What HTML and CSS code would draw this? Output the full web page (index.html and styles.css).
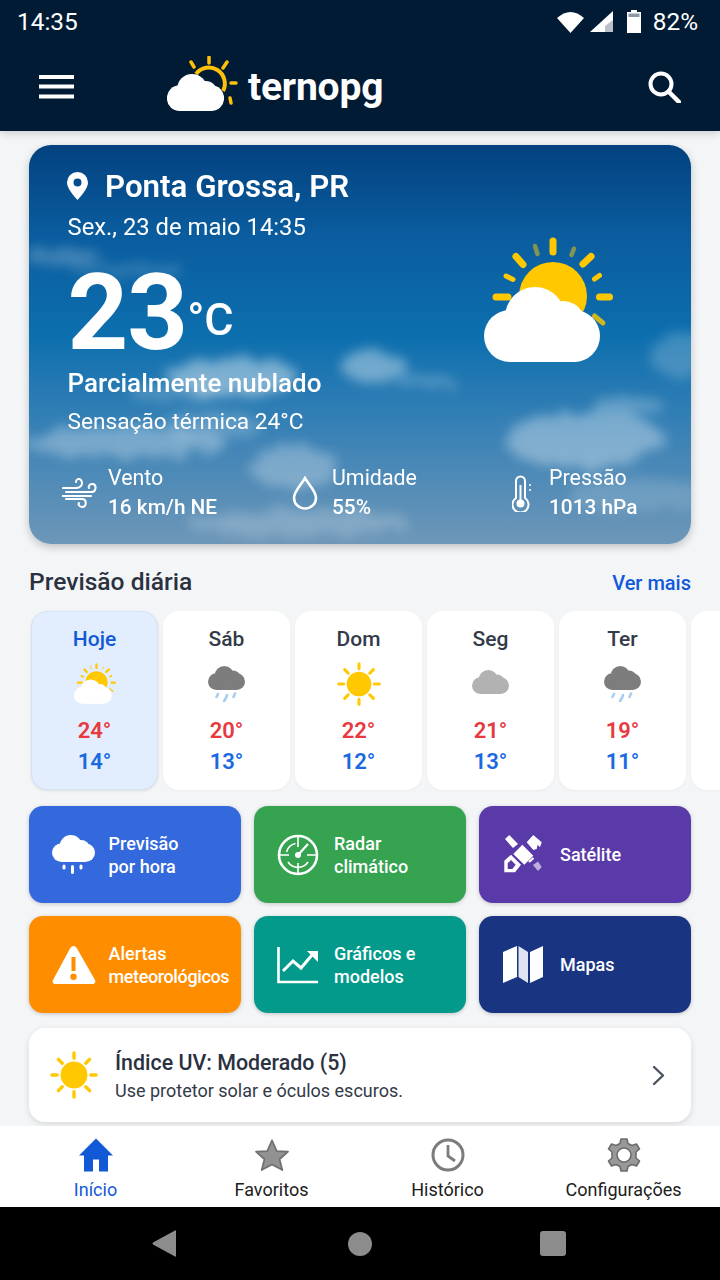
FILE: index.html
```html
<!DOCTYPE html>
<html lang="pt-BR">
<head>
<meta charset="utf-8">
<title>ternopg</title>
<link rel="stylesheet" href="styles.css">
</head>
<body>
<svg class="defs" width="0" height="0" aria-hidden="true">
  <defs>
    <symbol id="cloud" viewBox="0 50 116 75">
      <circle cx="26" cy="99" r="26"/><circle cx="51" cy="80" r="30"/><circle cx="79" cy="86" r="22"/><circle cx="90" cy="99" r="26"/><rect x="26" y="85" width="64" height="40"/>
    </symbol>
    <symbol id="sun-rays" viewBox="0 0 100 100">
      <g stroke-width="7" stroke-linecap="round" fill="none" stroke="currentColor">
        <path d="M50 4V15M50 85V96M4 50H15M85 50H96M17.5 17.5L25.5 25.5M74.5 74.5L82.5 82.5M17.5 82.5L25.5 74.5M74.5 25.5L82.5 17.5"/>
      </g>
      <circle cx="50" cy="50" r="28" fill="currentColor"/>
    </symbol>
    <symbol id="partly" viewBox="0 0 129 125">
      <circle cx="69" cy="59" r="34" fill="#ffc800"/>
      <g stroke="#ffc800" stroke-linecap="round" fill="none">
        <path stroke-width="7" d="M69 4V15M12 60H24M115.500 60H125.500M32 19.500L39 27.500M107 19.500L99 27"/>
        <path stroke-width="5" d="M22 39L29 42.500M115.500 38.500L110.500 42"/>
        <path stroke-width="4.500" opacity=".5" d="M51 9L53.500 17M90 11.500L87.500 18"/>
        <path stroke-width="5" opacity=".8" d="M110.500 79L119 86"/>
      </g>
      <g fill="#fff"><circle cx="26" cy="99" r="26"/><circle cx="51" cy="80" r="30"/><circle cx="79" cy="86" r="22"/><circle cx="90" cy="99" r="26"/><rect x="26" y="85" width="64" height="40"/></g>
    </symbol>
    <filter id="fluff" x="-30%" y="-60%" width="160%" height="220%">
      <feTurbulence type="fractalNoise" baseFrequency="0.05" numOctaves="4" seed="7"/>
      <feDisplacementMap in="SourceGraphic" scale="18"/>
      <feGaussianBlur stdDeviation="6"/>
    </filter>
  </defs>
</svg>

<div class="app">
  <header class="top">
    <div class="status">
      <span>14:35</span>
      <div class="status-right">
        <svg class="ic-wifi" viewBox="0 0 27 22"><path d="M0 7Q13.500-5 27 7L13.500 22Z" fill="#fff"/></svg>
        <svg class="ic-signal" viewBox="0 0 23 21"><path d="M23 0V21H0Z" fill="#fff"/><path d="M23 9V21H15V15Z" fill="#b9c0c7"/></svg>
        <svg class="ic-batt" viewBox="0 0 14 23"><path d="M4 0H10V2H14V23H0V2H4Z" fill="#fff"/><path d="M1.500 3.500H12.500V7H1.500Z" fill="#8d98a4"/></svg>
        <span>82%</span>
      </div>
    </div>
    <div class="bar">
      <svg class="ic-menu" viewBox="0 0 35 24"><path d="M0 2H35M0 11.500H35M0 21.500H35" stroke="#fff" stroke-width="4"/></svg>
      <div class="logo">
        <svg class="logo-mark" viewBox="0 0 72 56">
          <path d="M30 18A16 16 0 0 1 57 35" fill="none" stroke="#ffc107" stroke-width="4"/>
          <path d="M43 1V7M65 27H70M25 6L28 11M61 6L57 12M64 42L65 47" stroke="#ffc107" stroke-width="3.500" stroke-linecap="round" fill="none"/>
          <svg x="0" y="18" width="59" height="37" viewBox="0 50 116 75"><use href="#cloud" width="116" height="75" y="50" fill="#fff"/></svg>
        </svg>
        <span class="logo-text">ternopg</span>
      </div>
      <svg class="ic-search" viewBox="0 0 33 32"><circle cx="13" cy="13" r="10.500" fill="none" stroke="#fff" stroke-width="4"/><path d="M20.500 20.500L31 31" stroke="#fff" stroke-width="4.500" stroke-linecap="round"/></svg>
    </div>
  </header>

  <main class="content">
    <section class="hero">
      <svg class="sky" viewBox="0 0 662 400" preserveAspectRatio="none" aria-hidden="true">
        <g filter="url(#fluff)" fill="#fff">
          <ellipse cx="35" cy="112" rx="38" ry="9" opacity=".22"/>
          <ellipse cx="100" cy="126" rx="55" ry="8" opacity=".14"/>
          <ellipse cx="205" cy="232" rx="65" ry="18" opacity=".42"/>
          <ellipse cx="150" cy="248" rx="50" ry="9" opacity=".18"/>
          <ellipse cx="345" cy="222" rx="34" ry="16" opacity=".38"/>
          <ellipse cx="395" cy="237" rx="30" ry="6" opacity=".22"/>
          <ellipse cx="650" cy="210" rx="30" ry="22" opacity=".2"/>
          <ellipse cx="95" cy="298" rx="100" ry="16" opacity=".3"/>
          <ellipse cx="185" cy="282" rx="50" ry="13" opacity=".2"/>
          <ellipse cx="265" cy="322" rx="45" ry="22" opacity=".28"/>
          <ellipse cx="555" cy="295" rx="80" ry="28" opacity=".34"/>
          <ellipse cx="600" cy="262" rx="34" ry="10" opacity=".26"/>
          <ellipse cx="270" cy="378" rx="110" ry="14" opacity=".2"/>
          <ellipse cx="610" cy="350" rx="75" ry="16" opacity=".14"/>
        </g>
      </svg>
      <div class="hero-head">
        <div class="hero-left">
          <div class="place">
            <svg class="ic-pin" viewBox="0 0 21 28"><path fill-rule="evenodd" d="M10.500 0A10.500 10.500 0 0 1 21 10.500C21 16 15 23 10.500 28 6 23 0 16 0 10.500A10.500 10.500 0 0 1 10.500 0ZM10.500 6.500A4 4 0 1 0 10.500 14.500 4 4 0 0 0 10.500 6.500Z" fill="#fff"/></svg>
            <h1>Ponta Grossa, PR</h1>
          </div>
          <p class="date">Sex., 23 de maio 14:35</p>
          <div class="temp"><span class="temp-num">23</span><span class="temp-unit">°C</span></div>
          <p class="cond">Parcialmente nublado</p>
          <p class="feel">Sensação térmica 24°C</p>
        </div>
        <svg class="hero-icon"><use href="#partly"/></svg>
      </div>
      <div class="metrics">
        <div class="metric">
          <svg class="ic-wind" viewBox="0 0 36 30" fill="none" stroke="#fff" stroke-width="2" stroke-linecap="round"><path d="M1 10H14M4 14H30C34 14 35 7 31 6 28 5.500 26 8 27 10M0 18H29M4 21H20C25 21 25 29 20 29 17 29 16 26 17 25M14 10C20 10 21 5 19 2 17 0 14 1 14 4"/></svg>
          <div><span class="m-label">Vento</span><span class="m-val">16 km/h NE</span></div>
        </div>
        <div class="metric m-b">
          <svg class="ic-drop" viewBox="0 0 26 34" fill="none" stroke="#fff" stroke-width="2.600"><path d="M13 2C16 8 24 15 24 22A11 10.500 0 0 1 2 22C2 15 10 8 13 2Z"/></svg>
          <div><span class="m-label">Umidade</span><span class="m-val">55%</span></div>
        </div>
        <div class="metric m-c">
          <svg class="ic-thermo" viewBox="0 0 20 37" fill="none" stroke="#fff" stroke-width="2"><path d="M4 23V6A4.500 4.500 0 0 1 13 6V23A8 8 0 1 1 4 23Z"/><path d="M8.500 10V26" stroke-width="2"/><circle cx="8.500" cy="28.500" r="4" fill="#fff" stroke="none"/><path d="M18 9V11M18 14V16" stroke-width="1.500"/></svg>
          <div><span class="m-label">Pressão</span><span class="m-val">1013 hPa</span></div>
        </div>
      </div>
    </section>

    <div class="sec-head">
      <h2>Previsão diária</h2>
      <a class="more">Ver mais</a>
    </div>

    <div class="days">
      <article class="day day-on">
        <span class="d-name">Hoje</span>
        <div class="d-ic"><svg class="d-partly"><use href="#partly"/></svg></div>
        <span class="d-hi">24°</span><span class="d-lo">14°</span>
      </article>
      <article class="day">
        <span class="d-name">Sáb</span>
        <div class="d-ic"><svg class="d-rain" viewBox="0 0 37 36"><svg width="37" height="24" viewBox="0 50 116 75" preserveAspectRatio="none"><use href="#cloud" width="116" height="75" y="50" fill="#7d7d7d"/></svg><path d="M10 28L8.500 31M19 29L18 32M27 27.500L25.500 31M17 33L16 36" stroke="#a8cdf0" stroke-width="2.600" stroke-linecap="round"/></svg></div>
        <span class="d-hi">20°</span><span class="d-lo">13°</span>
      </article>
      <article class="day">
        <span class="d-name">Dom</span>
        <div class="d-ic"><svg class="d-sun"><use href="#sun-rays"/></svg></div>
        <span class="d-hi">22°</span><span class="d-lo">12°</span>
      </article>
      <article class="day">
        <span class="d-name">Seg</span>
        <div class="d-ic"><svg class="d-rain" viewBox="0 0 37 36"><svg y="4" width="37" height="24" viewBox="0 50 116 75" preserveAspectRatio="none"><use href="#cloud" width="116" height="75" y="50" fill="#b2b2b2"/></svg></svg></div>
        <span class="d-hi">21°</span><span class="d-lo">13°</span>
      </article>
      <article class="day">
        <span class="d-name">Ter</span>
        <div class="d-ic"><svg class="d-rain" viewBox="0 0 37 36"><svg width="37" height="24" viewBox="0 50 116 75" preserveAspectRatio="none"><use href="#cloud" width="116" height="75" y="50" fill="#7d7d7d"/></svg><path d="M10 28L8.500 31M19 29L18 32M27 27.500L25.500 31M17 33L16 36" stroke="#a8cdf0" stroke-width="2.600" stroke-linecap="round"/></svg></div>
        <span class="d-hi">19°</span><span class="d-lo">11°</span>
      </article>
      <article class="day"></article>
    </div>

    <div class="tiles">
      <a class="tile t-blue">
        <svg class="t-ic" viewBox="0 0 44 40"><svg width="43" height="27" viewBox="0 50 116 75" preserveAspectRatio="none"><use href="#cloud" width="116" height="75" y="50" fill="#fff"/></svg><path d="M12 31V33M20.500 31.500V37.500M29 31V33" stroke="#fff" stroke-width="3" stroke-linecap="round"/></svg>
        <span>Previsão<br>por hora</span>
      </a>
      <a class="tile t-green">
        <svg class="t-ic" viewBox="0 0 44 42" fill="none" stroke="#fff"><circle cx="21" cy="21" r="19" stroke-width="2.600"/><path d="M9.500 18A12 12 0 0 1 18.500 9.500M11 28A12 12 0 0 0 31 28" stroke-width="1.600"/><path d="M21 2V13M21 29V40M2 21H12M30 21H40" stroke-width="1.600"/><path d="M21 21L31 10" stroke-width="2.200"/><circle cx="21" cy="21" r="3" fill="#fff" stroke="none"/></svg>
        <span>Radar<br>climático</span>
      </a>
      <a class="tile t-purple">
        <svg class="t-ic" viewBox="0 0 44 40"><g fill="#fff"><path d="M2 4L6.300 0 15 9 10 13Z"/><path d="M23.700 7.300L30.300 0 38.700 7.300 37 12.300 34.700 9.700 33.700 14 30.300 15Z"/><path d="M10.300 19L19.300 9.700 30.300 20.700 21.300 29.700Z"/></g><path fill-rule="evenodd" d="M1.300 37.300V25.700L8 19.700 18 29.700 12 37.300ZM4.700 34H9.300L12.700 29.700 8 25 4.700 28.300Z" fill="#fff"/><path d="M26 27L30.500 23" stroke="#fff" stroke-width="2.200"/><path d="M30 30L35 26.500 38.700 32 35 36Z" fill="#fff" opacity=".6"/></svg>
        <span>Satélite</span>
      </a>
      <a class="tile t-orange">
        <svg class="t-ic" viewBox="0 0 44 40"><path fill-rule="evenodd" d="M21.500 1C23 1 24 2 25 3.500L43 35C44 37 43 39 40 39H3C1 39 0 37 1 35L18 3.500C19 2 20 1 21.500 1ZM19.500 12V26H23.500V12ZM21.500 28.500A3.200 3.200 0 1 0 21.500 34.900 3.200 3.200 0 0 0 21.500 28.500Z" fill="#fff"/></svg>
        <span>Alertas<br><span class="t-fit">meteorológicos</span></span>
      </a>
      <a class="tile t-teal">
        <svg class="t-ic" viewBox="0 0 44 38" fill="none" stroke="#fff" stroke-width="2.600"><path d="M1.500 1V36H41"/><path d="M6 25L16 15 24 22 35 9" stroke-width="3"/><path d="M30 5H41V16Z" fill="#fff" stroke="none"/></svg>
        <span>Gráficos e<br>modelos</span>
      </a>
      <a class="tile t-navy">
        <svg class="t-ic" viewBox="0 0 44 38"><path d="M0 6L14 0V31L0 37Z" fill="#fff"/><path d="M15.500 0L25 6V37L15.500 31Z" fill="#dfe4f2"/><path d="M27 6L40 0V31L27 37Z" fill="#fff"/></svg>
        <span>Mapas</span>
      </a>
    </div>

    <a class="uv">
      <svg class="uv-sun"><use href="#sun-rays"/></svg>
      <div class="uv-text">
        <strong>Índice UV: Moderado (5)</strong>
        <span>Use protetor solar e óculos escuros.</span>
      </div>
      <svg class="uv-chev" viewBox="0 0 13 21" fill="none" stroke="#4a5260" stroke-width="2.400" stroke-linecap="round" stroke-linejoin="round"><path d="M2 2L11 10.500 2 19"/></svg>
    </a>
  </main>

  <nav class="nav">
    <a class="nav-item is-on">
      <svg viewBox="0 0 34 33"><path d="M17 0L34 17H29V33H20V21H14V33H5V17H0Z" fill="#1259d8"/></svg>
      <span>Início</span>
    </a>
    <a class="nav-item">
      <svg viewBox="0 0 36 34"><path d="M18 1.500L23 12.800 35 13.500 26 21.500 29 33 18 27 7 33 10 21.500 1 13.500 13 12.800Z" fill="#929292" stroke="#707070" stroke-width="1.800" stroke-linejoin="round"/></svg>
      <span>Favoritos</span>
    </a>
    <a class="nav-item">
      <svg viewBox="0 0 34 34" fill="none" stroke="#7c7c7c" stroke-width="3"><circle cx="17" cy="17" r="15"/><path d="M17 7V18L24 23" stroke-width="2.800"/></svg>
      <span>Histórico</span>
    </a>
    <a class="nav-item">
      <svg viewBox="0 0 34 34"><path fill-rule="evenodd" d="M14 1H20L21 5.500 25 7.500 29.500 6 32.500 11 29 14V20L32.500 23 29.500 28 25 26.500 21 28.500 20 33H14L13 28.500 9 26.500 4.500 28 1.500 23 5 20V14L1.500 11 4.500 6 9 7.500 13 5.500ZM17 10A7 7 0 1 0 17 24 7 7 0 0 0 17 10Z" fill="#999" stroke="#6c6c6c" stroke-width="1.600" stroke-linejoin="round"/></svg>
      <span>Configurações</span>
    </a>
  </nav>

  <footer class="sysnav">
    <svg class="sys-back" viewBox="0 0 24 27"><path d="M24 1V26Q24 27 23 26.500L1 14.500Q0 13.500 1 12.500L23 .5Q24 0 24 1Z" fill="#8c8c8c"/></svg>
    <span class="sys-home"></span>
    <span class="sys-recent"></span>
  </footer>
</div>
</body>
</html>
```

FILE: styles.css
```css
* { box-sizing: border-box; }
html, body { margin: 0; padding: 0; }
body { font-family: Roboto, "Liberation Sans", sans-serif; background: #f4f5f7; color: #2a3140; }
h1, h2, p { margin: 0; font-weight: inherit; font-size: inherit; }
.defs { position: absolute; }
.app { width: 720px; height: 1280px; display: flex; flex-direction: column; overflow: hidden; }

.top { height: 131px; background: #021b35; color: #fff; box-shadow: 0 2px 8px rgba(0,0,0,.18); position: relative; z-index: 2; flex: none; }
.status { height: 43px; padding: 0 22px 0 17px; display: flex; align-items: center; justify-content: space-between; font-size: 24.400px; }
.status-right { display: flex; align-items: center; }
.ic-wifi { width: 27px; height: 22px; margin-right: 6px; }
.ic-signal { width: 23px; height: 21px; margin-right: 14px; }
.ic-batt { width: 14px; height: 23px; margin-right: 12px; }
.bar { height: 88px; padding: 0 39px 0 39px; display: flex; align-items: center; position: relative; }
.ic-menu { width: 35px; height: 24px; }
.logo { display: flex; align-items: center; margin-left: 92px; }
.logo-mark { width: 72px; height: 56px; margin-top: -6px; }
.logo-text { font-size: 39px; font-weight: 700; margin-left: 10px; letter-spacing: -.2px; line-height: 44px; }
.ic-search { width: 33px; height: 32px; margin-left: auto; }

.content { flex: 1; padding: 14px 29px 0; display: flex; flex-direction: column; }

.hero { height: 399px; border-radius: 22px; position: relative; overflow: hidden; color: #fff; padding: 23px 78px 0 38.500px; background: linear-gradient(180deg, #03417f 0%, #0a5c9e 22%, #0d6fae 48%, #3a82b6 72%, #6e97b8 100%); box-shadow: 0 3px 8px rgba(0,0,0,.22); flex: none; }
.sky { position: absolute; left: 0; top: 0; width: 100%; height: 100%; }
.hero-head { position: relative; display: flex; justify-content: space-between; }
.place { display: flex; align-items: center; height: 38px; }
.ic-pin { width: 21px; height: 28px; margin-right: 17.500px; margin-left: -1px; margin-top: -2px; }
.place h1 { font-size: 31.300px; font-weight: 600; line-height: 38px; }
.date { font-size: 23.800px; line-height: 28px; margin-top: 7px; }
.temp { display: flex; align-items: baseline; height: 100px; margin-top: 22px; line-height: 100px; }
.temp-num { font-size: 106px; font-weight: 700; letter-spacing: -1px; }
.temp-unit { font-size: 45px; font-weight: 500; position: relative; top: -14px; }
.cond { font-size: 26px; font-weight: 500; line-height: 30px; margin-top: 5px; }
.feel { font-size: 22.700px; line-height: 28px; margin-top: 10px; }
.hero-icon { width: 129px; height: 125px; margin-top: 69px; flex: none; }

.metrics { position: relative; display: grid; grid-template-columns: 228px 220px 1fr; margin: 28px -78px 0 -5.500px; }
.metric { display: flex; align-items: center; }
.metric div { display: flex; flex-direction: column; }
.m-label { font-size: 21.400px; line-height: 29px; margin-top: -1px; margin-bottom: 1px; }
.m-val { font-size: 20.800px; line-height: 29px; font-weight: 500; }
.ic-wind { width: 36px; height: 30px; margin-right: 10px; }
.ic-drop { width: 26px; height: 34px; margin-left: 2px; margin-right: 14px; }
.ic-thermo { width: 20px; height: 37px; margin-left: 2px; margin-right: 17px; }

.sec-head { display: flex; justify-content: space-between; align-items: center; height: 32px; margin-top: 23px; margin-bottom: -1px; }
.sec-head h2 { font-size: 24.600px; font-weight: 500; color: #2a3140; margin-bottom: 3px; }
.more { font-size: 20px; font-weight: 500; color: #1259d8; }

.days { display: flex; gap: 5px; margin: 13px -29px 0 0; padding: 0 0 0 2px; height: 179px; flex: none; }
.day { width: 127px; height: 179px; flex: none; background: #fff; border-radius: 16px; display: flex; flex-direction: column; align-items: center; padding-top: 14px; box-shadow: 0 1px 3px rgba(0,0,0,.04); }
.day-on { background: #e2eefd; border: 1px solid #d5e3f6; padding-top: 13px; box-shadow: 0 1px 3px rgba(0,0,0,.1); }
.d-name { font-size: 21px; font-weight: 500; line-height: 28px; color: #333a48; }
.day-on .d-name { color: #1259d8; }
.d-ic { height: 61px; display: flex; align-items: center; justify-content: center; margin-bottom: 1px; }
.d-partly { width: 42px; height: 41px; }
.d-rain { width: 37px; height: 36px; }
.d-sun { width: 44px; height: 44px; color: #ffc800; }
.d-hi { font-size: 22px; font-weight: 600; line-height: 31px; color: #e8393f; }
.d-lo { font-size: 22px; font-weight: 600; line-height: 31px; color: #1a69e0; }

.tiles { display: grid; grid-template-columns: repeat(3, 212px); grid-auto-rows: 97px; gap: 13px; margin-top: 16px; flex: none; }
.tile { border-radius: 14px; color: #fff; display: flex; align-items: center; padding-left: 23px; font-size: 18px; font-weight: 500; line-height: 23px; box-shadow: 0 1px 4px rgba(0,0,0,.2); }
.t-ic { width: 44px; height: 42px; margin-right: 13px; flex: none; }
.t-fit { letter-spacing: -.38px; }
.t-blue { background: #3369dc; }
.t-blue .t-ic, .t-orange .t-ic { margin-right: 12.500px; }
.t-green { background: #35a350; }
.t-purple { background: #5a3aa8; padding-left: 24px; }
.t-orange { background: #ff8d00; }
.t-teal { background: #039a8c; }
.t-navy { background: #193582; padding-left: 24px; }

.uv { margin-top: 15px; height: 94px; background: #fff; border-radius: 16px; display: flex; align-items: center; padding: 0 26px 0 21px; box-shadow: 0 2px 6px rgba(0,0,0,.12); flex: none; }
.uv-sun { width: 48px; height: 48px; color: #ffc800; }
.uv-text { margin-left: 17px; display: flex; flex-direction: column; padding-top: 3px; }
.uv-text strong { font-size: 21.400px; font-weight: 500; line-height: 29px; color: #2a3140; }
.uv-text span { font-size: 18px; line-height: 28px; color: #333a48; }
.uv-chev { width: 13px; height: 21px; margin-left: auto; }

.nav { height: 81px; background: #fff; display: grid; grid-template-columns: repeat(4, 176px); padding-left: 7.500px; flex: none; position: relative; z-index: 1; }
.nav-item { display: flex; flex-direction: column; align-items: center; padding-top: 12px; font-size: 18px; color: #202020; }
.nav-item svg { width: 34px; height: 34px; }
.nav-item span { line-height: 24px; margin-top: 6px; }
.is-on { color: #1259d8; }

.sysnav { height: 73px; background: #000; display: flex; align-items: center; flex: none; padding-left: 152px; }
.sys-back { width: 24px; height: 27px; }
.sys-home { width: 24px; height: 24px; border-radius: 50%; background: #8c8c8c; margin-left: 172px; }
.sys-recent { width: 26px; height: 25px; border-radius: 3px; background: #8c8c8c; margin-left: 168px; }
```
